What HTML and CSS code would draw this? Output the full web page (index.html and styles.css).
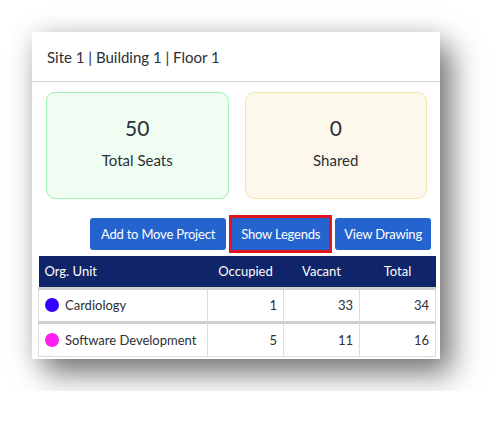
FILE: index.html
```html
<!DOCTYPE html>
<html>
<head>
<meta charset="utf-8">
<link rel="stylesheet" href="styles.css">
</head>
<body>
<div class="card">
  <div class="card-header">Site 1 | Building 1 | Floor 1</div>
  <div class="card-body">
    <div class="stats">
      <div class="stat stat-green">
        <div class="stat-num">50</div>
        <div class="stat-label">Total Seats</div>
      </div>
      <div class="stat stat-yellow">
        <div class="stat-num">0</div>
        <div class="stat-label">Shared</div>
      </div>
    </div>
    <div class="actions">
      <button class="btn btn-wide">Add to Move Project</button>
      <button class="btn btn-outlined">Show Legends</button>
      <button class="btn">View Drawing</button>
    </div>
    <table class="grid">
      <colgroup>
        <col class="c-org"><col class="c-num"><col class="c-num"><col class="c-num">
      </colgroup>
      <thead>
        <tr><th class="th-left">Org. Unit</th><th>Occupied</th><th>Vacant</th><th>Total</th></tr>
      </thead>
      <tbody>
        <tr><td><span class="dot dot-blue"></span>Cardiology</td><td class="n">1</td><td class="n">33</td><td class="n">34</td></tr>
        <tr><td><span class="dot dot-pink"></span>Software Development</td><td class="n">5</td><td class="n">11</td><td class="n">16</td></tr>
      </tbody>
    </table>
  </div>
</div>
</body>
</html>
```
FILE: styles.css
```css
* { box-sizing: border-box; }
html, body { margin: 0; background: #fff; }
body {
  padding: 32px;
  font-family: "Lato", "Liberation Sans", sans-serif;
  color: #2b2f36;
}
.card {
  width: 408px;
  height: 327px;
  background: #fff;
  box-shadow: 12px 15px 28px rgba(0,0,0,0.5), 0 0 24px rgba(0,0,0,0.12);
}
.card-header {
  height: 50px;
  padding: 0 15px;
  display: flex;
  align-items: center;
  font-size: 15px;
  border-bottom: 1px solid #d4d4d4;
}
.card-body {
  padding: 10px 4px 0 6px;
}
.stats {
  display: flex;
  gap: 16px;
  padding: 0 9px 0 8px;
}
.stat {
  flex: 1;
  height: 107px;
  border-radius: 9px;
  border: 1px solid;
  display: flex;
  flex-direction: column;
  align-items: center;
  padding-top: 22px;
}
.stat-green { background: #effdf3; border-color: #a2f1b6; }
.stat-yellow { background: #fcf9ec; border-color: #f4e6a9; }
.stat-num { font-size: 21px; line-height: 26px; }
.stat-label { font-size: 15px; line-height: 20px; margin-top: 9px; }
.actions {
  display: flex;
  justify-content: flex-end;
  gap: 6px;
  margin-top: 19px;
  padding-right: 5px;
}
.btn {
  height: 32px;
  padding: 0 9px;
  border: none;
  border-radius: 3px;
  background: #2563cf;
  color: #fff;
  font-family: inherit;
  font-size: 13px;
  letter-spacing: -0.2px;
}
.btn-wide { padding: 0 11px; }
.btn-outlined {
  outline: 3px solid #e3141e;
  outline-offset: 0;
  border-radius: 0;
}
.grid {
  margin-top: 6px;
  width: 398px;
  border-collapse: collapse;
  table-layout: fixed;
  font-size: 13px;
}
.c-org { width: 169px; }
.c-num { width: 76px; }
.grid th {
  background: #0f2469;
  color: #fff;
  font-weight: normal;
  height: 32px;
  padding: 0 6px;
  text-align: center;
  white-space: nowrap;
}
.grid th.th-left { text-align: left; }
.grid td {
  height: 34px;
  padding: 0 6px;
  border: 1px solid #dcdcdc;
  border-top: 3px solid #cfcfcf;
  white-space: nowrap;
}
.grid td.n { text-align: right; }
.dot {
  display: inline-block;
  width: 14px;
  height: 14px;
  border-radius: 50%;
  vertical-align: -2px;
  margin-right: 6px;
}
.dot-blue { background: #3300ff; }
.dot-pink { background: #ff1ef0; }
```
